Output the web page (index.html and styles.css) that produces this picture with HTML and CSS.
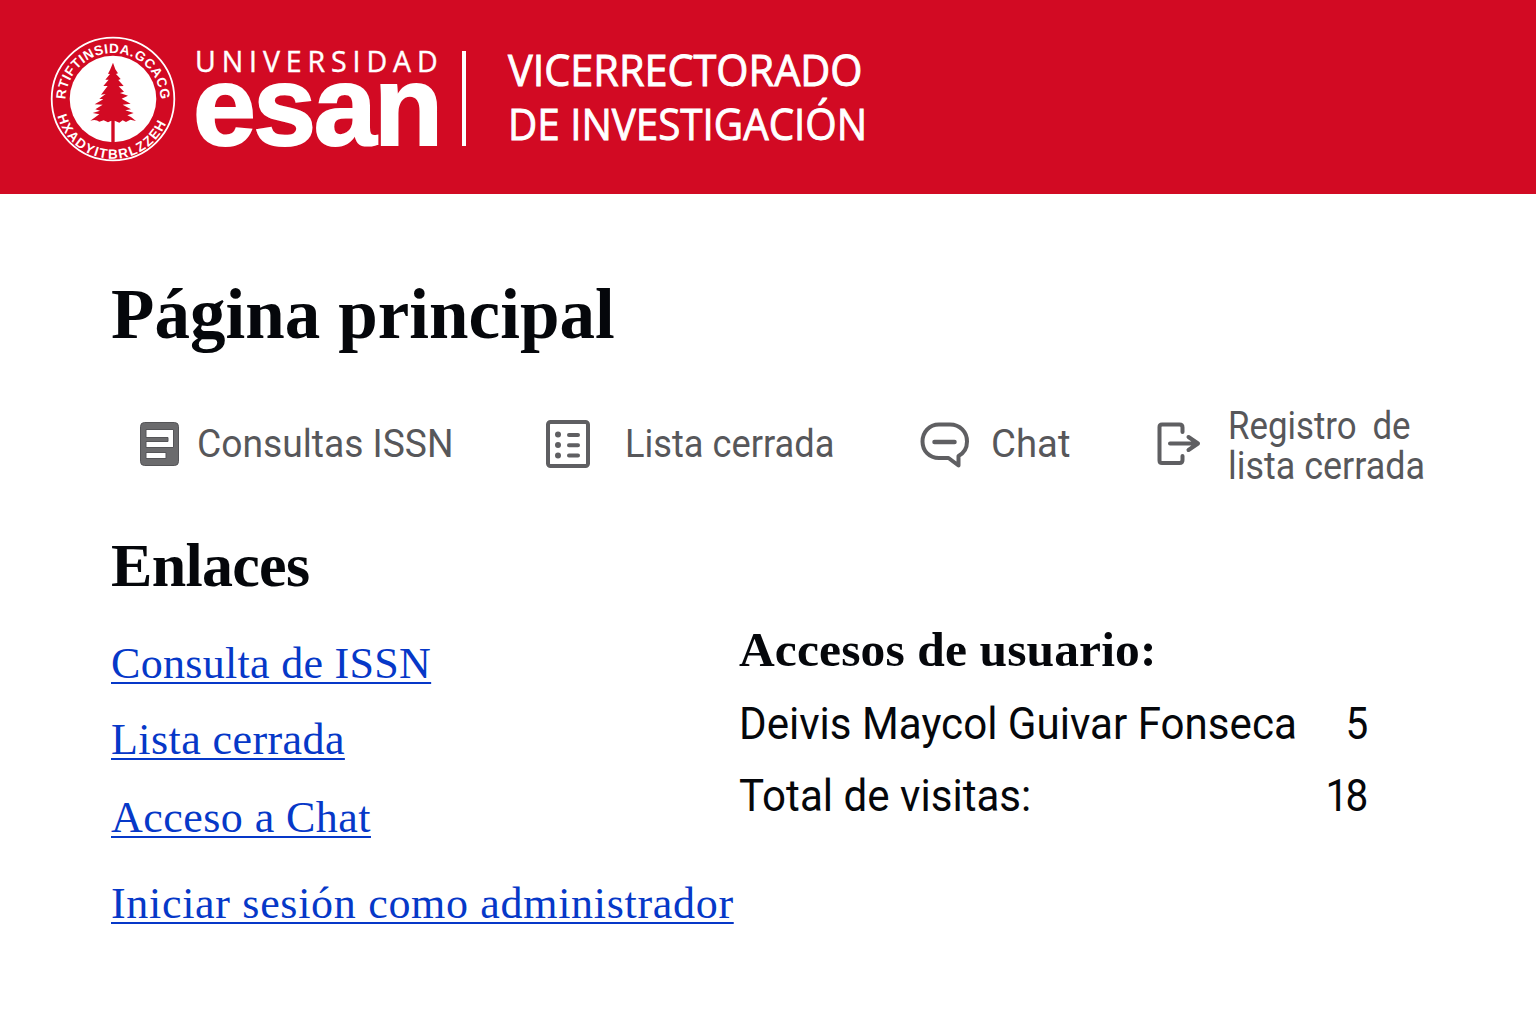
FILE: index.html
```html
<!DOCTYPE html>
<html lang="es">
<head>
<meta charset="utf-8">
<title>Página principal</title>
<link rel="stylesheet" href="styles.css">
</head>
<body>
<header class="banner">
  <svg class="seal" viewBox="0 0 126 128" role="img" aria-label="Sello">
    <defs>
      <path id="arc-top" d="M15.500 65.500A47.500 47.500 0 0 1 110.500 65.500"/>
      <path id="arc-bottom" d="M6.500 77A57.500 57.500 0 0 0 119.500 77"/>
    </defs>
    <circle cx="63" cy="64" r="61.300" fill="none" stroke="#fff" stroke-width="1.800"/>
    <circle cx="63" cy="64" r="43.300" fill="#fff"/>
    <text class="seal-text"><textPath href="#arc-top" textLength="147" startOffset="1">RTIFTINSIDA.GCACG</textPath></text>
    <text class="seal-text"><textPath href="#arc-bottom" textLength="143" startOffset="4">HXADYITBRLZZEH</textPath></text>
    <path transform="translate(-10 -10) scale(.3333)" fill="#d20a23" d="M219 113L210 135 204 146 210 147 196 164 206 164 190 183 203 183 183 209 197 207 178 221 190 223 164 238 188 239 166 253 180 257 158 264 178 268 151 287Q168 282 178 290L191 286 204 292 214 287V354H224V287L238 293 248 286 258 291 271 284 288 288Q277 276 262 271L281 264 256 256 273 253 248 239 272 236 245 221 264 212 240 204 252 200 236 184 251 183 235 165 242 162 228 147 234 145 226 133Z"/>
  </svg>
  <div class="brand">
    <span class="brand-top">UNIVERSIDAD</span>
    <span class="brand-name">esan</span>
  </div>
  <div class="rule"></div>
  <div class="office">
    <span class="office-a">VICERRECTORADO</span>
    <span class="office-b">DE INVESTIGACIÓN</span>
  </div>
</header>
<main>
  <h1>Página principal</h1>
  <nav class="menu">
    <a class="item item-issn">
      <svg width="39" height="44" viewBox="0 0 39 44"><rect x=".5" y=".5" width="38" height="43" rx="4" fill="#6b6b6d" stroke="#555558"/><path fill="#fff" stroke="#555558" d="M6 7.500H33.500V25.500H6V19.500H28V15.500H6ZM6 30.500H26V36.500H6Z"/></svg>
      <span class="label">Consultas ISSN</span>
    </a>
    <a class="item item-list">
      <svg width="44" height="48" viewBox="0 0 44 48" fill="none" stroke="#5f5f62" stroke-width="4"><rect x="2" y="2" width="40" height="44" rx="2.500"/><path stroke-linecap="round" d="M23 15h9M23 25.200h9M23 35.500h9"/><g fill="#5f5f62" stroke="none"><circle cx="12" cy="14.500" r="3"/><circle cx="12" cy="25" r="3"/><circle cx="12" cy="35.500" r="3"/></g></svg>
      <span class="label">Lista cerrada</span>
    </a>
    <a class="item item-chat">
      <svg width="50" height="47" viewBox="0 0 50 47" fill="none" stroke="#5f5f62" stroke-width="4" stroke-linejoin="round" stroke-linecap="round"><path d="M19 3.500h11C40 3.500 47 11 47 20.500c0 7-3 11.500-8.500 14.500V44.500L28.500 37H19C9 37 2.500 29.500 2.500 20.500S9 3.500 19 3.500z"/><path d="M14.500 21h20" stroke-width="4.500"/></svg>
      <span class="label">Chat</span>
    </a>
    <a class="item item-exit">
      <svg width="44" height="44" viewBox="0 0 44 44" fill="none" stroke="#5f5f62" stroke-width="4" stroke-linecap="round" stroke-linejoin="round"><path d="M25.500 10V5.500Q25.500 2.500 22.500 2.500H5Q2.500 2.500 2.500 5V38.500Q2.500 41 5 41H22.500Q25.500 41 25.500 38V34M13 21.500H40M31.500 15L41 21.500 31.500 28"/></svg>
      <span class="two"><span class="label spread">Registro de</span><span class="label">lista cerrada</span></span>
    </a>
  </nav>
  <div class="columns">
    <section class="links">
      <h2>Enlaces</h2>
      <a class="link-a">Consulta de ISSN</a>
      <a class="link-b">Lista cerrada</a>
      <a class="link-c">Acceso a Chat</a>
      <a class="link-d">Iniciar sesión como administrador</a>
    </section>
    <section class="visits">
      <h3>Accesos de usuario:</h3>
      <div class="visit"><span class="name">Deivis Maycol Guivar Fonseca</span><span class="count">5</span></div>
      <div class="visit"><span class="name">Total de visitas:</span><span class="count tens">18</span></div>
    </section>
  </div>
</main>
</body>
</html>
```
FILE: styles.css
```css
* { box-sizing: border-box; }
body { margin: 0; background: #fff; color: #05070b; height: 1024px; overflow: hidden; }
h1, h2, h3 { margin: 0; font-family: "Liberation Serif", serif; font-weight: 700; white-space: nowrap; }

.banner { display: flex; align-items: flex-start; height: 194px; padding-left: 50px; background: #d20a23; color: #fff; font-family: "Open Sans", sans-serif; white-space: nowrap; }
.seal { width: 126px; height: 128px; margin-top: 35px; }
.seal-text { font: 700 13.500px "Liberation Sans", sans-serif; fill: #fff; }
.brand { display: flex; flex-direction: column; width: 243px; margin: 45px 0 0 19px; }
.brand-top { height: 32px; font-size: 28.500px; line-height: 32px; letter-spacing: 5.900px; -webkit-text-stroke: .4px #fff; }
.brand-name { height: 90px; margin: -16px 0 0 -2px; font: 700 113px/90px "Liberation Sans", sans-serif; letter-spacing: -2.500px; -webkit-text-stroke: 2px #fff; }
.rule { width: 4px; height: 95px; margin: 51px 0 0 24px; background: #fff; }
.office { display: flex; flex-direction: column; align-items: flex-start; margin: 43px 0 0 42px; font-size: 43px; line-height: 54px; -webkit-text-stroke: .9px #fff; }
.office span { transform-origin: left; }
.office-a { transform: scaleX(.963); }
.office-b { transform: scaleX(.938); }

main { padding-left: 111px; }
h1 { padding-top: 80px; font-size: 71px; line-height: 80px; letter-spacing: .050px; }
.menu { display: flex; height: 80px; margin-top: 50px; padding-left: 29px; color: #57575a; font-family: Roboto, sans-serif; font-size: 39.500px; line-height: 40px; white-space: nowrap; }
.item { display: flex; align-items: center; }
.item svg { flex: none; }
.item-issn { width: 406px; gap: 18px; }
.item-list { width: 374px; gap: 35px; }
.item-chat { width: 237px; gap: 21px; }
.item-exit { gap: 27px; }
.label { transform-origin: left; }
.item-issn .label { transform: scaleX(.942); }
.item-list .label { transform: scaleX(.917); }
.item-chat .label { transform: scaleX(.970); }
.item-exit .label { transform: scaleX(.909); }
.two { display: flex; flex-direction: column; align-items: flex-start; padding-top: 3px; }
.item-exit .spread { transform: scaleX(.882); word-spacing: 8px; }

.columns { display: grid; grid-template-columns: 628px 629px; }
.links { display: flex; flex-direction: column; align-items: flex-start; padding-top: 41px; font-family: "Liberation Serif", serif; font-size: 44px; line-height: 50px; white-space: nowrap; color: #0638c8; }
.links h2 { height: 80px; margin-bottom: 34px; color: #05070b; font-size: 62px; line-height: 80px; letter-spacing: -.700px; }
.links a { height: 50px; text-decoration: underline 2px; text-underline-offset: 4px; text-decoration-skip-ink: none; letter-spacing: .300px; }
.links .link-b { margin-top: 26px; letter-spacing: .420px; }
.links .link-c { margin-top: 28px; letter-spacing: .450px; }
.links .link-d { margin-top: 36px; letter-spacing: .690px; }
.visits { padding-top: 136px; font-family: Roboto, sans-serif; font-size: 45px; line-height: 60px; white-space: nowrap; }
.visits h3 { font-size: 49.500px; letter-spacing: .120px; line-height: 60px; margin-bottom: 14px; }
.visit { display: flex; justify-content: space-between; height: 60px; margin-bottom: 12px; }
.name { transform: scaleX(.936); transform-origin: left; }
.count { transform: scaleX(.900); transform-origin: right; }
.tens { letter-spacing: -3px; transform: translateX(-2px) scaleX(.900); }
```
